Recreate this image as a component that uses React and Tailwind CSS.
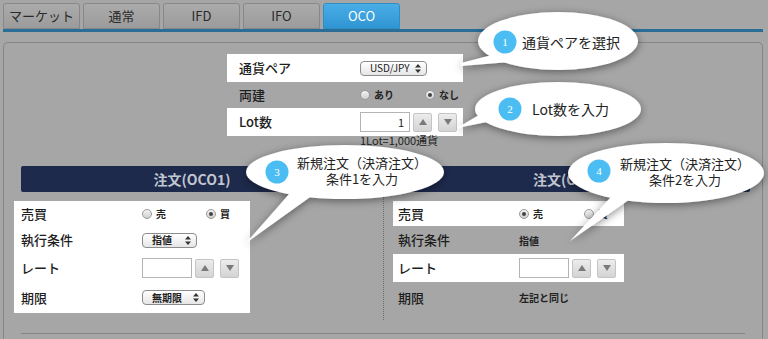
import React from 'react';

const FONT = { fontFamily: '"Noto Sans CJK JP", "Noto Sans", sans-serif' };

// little up/down arrows used in select boxes
function SelectArrows() {
  return (
    <svg width="6" height="9" viewBox="0 0 6 9" className="shrink-0">
      <path d="M3 0 L6 3.5 L0 3.5 Z" fill="#333" />
      <path d="M0 5.5 L6 5.5 L3 9 Z" fill="#333" />
    </svg>
  );
}

function Select({ label, width, bold = false }) {
  return (
    <div
      className={`h-[15px] ${width} rounded-[4px] border border-[#8c8c8c] bg-gradient-to-b from-white to-[#e6e6e6] flex items-center justify-between pl-[9px] pr-[5px]`}
    >
      <span className={`text-[10px] leading-none text-[#222] whitespace-nowrap ${bold ? 'font-bold' : ''}`}>{label}</span>
      <SelectArrows />
    </div>
  );
}

function Radio({ checked, label }) {
  return (
    <div className="flex items-center gap-[4px] shrink-0">
      <span className="w-[10px] h-[10px] shrink-0 rounded-full border border-[#9a9a9a] bg-gradient-to-b from-[#f4f4f4] to-[#cfcfcf] flex items-center justify-center">
        {checked && <span className="w-[4px] h-[4px] rounded-full bg-[#444]" />}
      </span>
      <span className="text-[10px] leading-none font-bold text-[#222] whitespace-nowrap">{label}</span>
    </div>
  );
}

function StepButton({ up }) {
  return (
    <div className="w-[19px] h-[19px] rounded-[2px] border border-[#c4c4c4] bg-gradient-to-b from-[#ececec] to-[#d4d4d4] flex items-center justify-center">
      <svg width="8" height="6" viewBox="0 0 8 6">
        {up ? <path d="M4 0 L8 6 L0 6 Z" fill="#7a7a7a" /> : <path d="M0 0 L8 0 L4 6 Z" fill="#7a7a7a" />}
      </svg>
    </div>
  );
}

function NumberInput({ value = '' }) {
  return (
    <div className="flex items-center">
      <div className="w-[50px] h-[20px] border border-[#b4b4b4] bg-white flex items-center justify-end pr-[5px] text-[11px] text-[#222]">
        {value}
      </div>
      <div className="ml-[3px]"><StepButton up /></div>
      <div className="ml-[6px]"><StepButton /></div>
    </div>
  );
}

function Tab({ label, active }) {
  return (
    <div
      className={`w-[77px] h-[26px] rounded-t-[3px] border flex items-center justify-center text-[13px] ${
        active
          ? 'bg-gradient-to-b from-[#49aee6] to-[#2f95d3] border-[#2f8cc4] text-white'
          : 'bg-gradient-to-b from-[#ababab] to-[#9b9b9b] border-[#878787] text-[#2a2a2a]'
      }`}
    >
      {label}
    </div>
  );
}

function Row({ label, height, white, labelWidth, labelPad, width, children }) {
  return (
    <div className={`flex items-center ${height} ${width} ${white ? 'bg-white' : ''}`}>
      <div className={`${labelWidth} ${labelPad} text-[13px] font-medium text-[#1e1e1e] shrink-0`}>{label}</div>
      {children}
    </div>
  );
}

function Header({ label, width, ml }) {
  return (
    <div className={`${ml} ${width} h-[26px] bg-[#1e2a4c] rounded-[2px] flex items-center justify-center`}>
      <span className="text-[14px] font-bold text-[#c2c6d0]">{label}</span>
    </div>
  );
}

// speech bubbles laid over the screen
function Bubbles() {
  return (
    <svg className="absolute left-0 top-0 pointer-events-none" width="768" height="339" viewBox="0 0 768 339">
      <defs>
        <filter id="sh" x="-20%" y="-40%" width="140%" height="180%">
          <feDropShadow dx="0" dy="2" stdDeviation="4" floodColor="#000" floodOpacity="0.45" />
        </filter>
      </defs>
      <g filter="url(#sh)" fill="#fff">
        <ellipse cx="558" cy="41" rx="80" ry="29" />
        <polygon points="496,54 510,62 461,66 461,63" />
      </g>
      <g filter="url(#sh)" fill="#fff">
        <ellipse cx="558" cy="109" rx="83" ry="27" />
        <polygon points="484,112 492,121 457,128" />
      </g>
      <g filter="url(#sh)" fill="#fff">
        <ellipse cx="345" cy="172" rx="99" ry="27" />
        <polygon points="290,193 313,195 246,243" />
      </g>
      <g filter="url(#sh)" fill="#fff">
        <ellipse cx="666" cy="173" rx="98" ry="30" />
        <polygon points="612,196 633,197 570,241" />
      </g>
      <g fill="#4bbdf3">
        <circle cx="505" cy="42" r="11.5" />
        <circle cx="510" cy="109" r="11.5" />
        <circle cx="277" cy="172" r="11.5" />
        <circle cx="599" cy="171" r="11.5" />
      </g>
    </svg>
  );
}

function Num({ n, x, y }) {
  return (
    <div
      className="absolute w-[24px] h-[24px] flex items-center justify-center text-[11px] text-white"
      style={{ left: x - 12, top: y - 12, fontFamily: '"Liberation Serif", serif' }}
    >
      {n}
    </div>
  );
}

export default function App() {
  return (
    <div className="relative w-[768px] h-[339px] overflow-hidden bg-[#a6a6a6]" style={FONT}>
      {/* tabs */}
      <div className="flex gap-[3px] pl-[3px] pt-[3px]">
        <Tab label="マーケット" />
        <Tab label="通常" />
        <Tab label="IFD" />
        <Tab label="IFO" />
        <Tab label="OCO" active />
      </div>
      <div className="ml-[3px] w-[760px] h-[3px] bg-[#2a6d96]" />

      {/* panel */}
      <div className="ml-[3px] mt-[10px] w-[760px] h-[300px] border border-b-0 border-[#858585] rounded-t-[5px]">
        <div className="pt-[11px] pl-[223px]">
          <Row label="通貨ペア" height="h-[28px]" width="w-[236px]" labelWidth="w-[133px]" labelPad="pl-[12px]" white>
            <Select label="USD/JPY" width="w-[67px]" />
          </Row>
          <Row label="両建" height="h-[26px]" width="w-[236px]" labelWidth="w-[133px]" labelPad="pl-[12px]">
            <div className="flex gap-[31px]">
              <Radio label="あり" />
              <Radio label="なし" checked />
            </div>
          </Row>
          <Row label="Lot数" height="h-[28px]" width="w-[236px]" labelWidth="w-[133px]" labelPad="pl-[12px]" white>
            <NumberInput value="1" />
          </Row>
          <div className="-mt-[2px] pl-[133px] h-[12px] leading-[12px] text-[11px] text-[#222] whitespace-nowrap">1Lot=1,000通貨</div>
        </div>

        <div className="flex mt-[20px]">
          {/* left order */}
          <div className="w-[379px] pl-[10px] shrink-0">
            <Header label="注文(OCO1)" width="w-[342px]" ml="ml-[7px]" />
            <div className="mt-[9px] w-[236px] bg-white">
              <Row label="売買" height="h-[25px]" width="w-full" labelWidth="w-[128px]" labelPad="pl-[7px]">
                <div className="flex gap-[40px]">
                  <Radio label="売" />
                  <Radio label="買" checked />
                </div>
              </Row>
              <Row label="執行条件" height="h-[28px]" width="w-full" labelWidth="w-[128px]" labelPad="pl-[7px]">
                <Select label="指値" width="w-[55px]" bold />
              </Row>
              <Row label="レート" height="h-[28px]" width="w-full" labelWidth="w-[128px]" labelPad="pl-[7px]">
                <NumberInput />
              </Row>
              <Row label="期限" height="h-[31px]" width="w-full" labelWidth="w-[128px]" labelPad="pl-[7px]">
                <Select label="無期限" width="w-[63px]" bold />
              </Row>
            </div>
          </div>

          <div className="mt-[29px] h-[125px] border-l border-dotted border-[#6e6e6e]" />

          {/* right order */}
          <div className="pl-[9px]">
            <Header label="注文(OCO2)" width="w-[357px]" ml="" />
            <div className="mt-[9px]">
              <Row label="売買" height="h-[25px]" width="w-[231px]" labelWidth="w-[126px]" labelPad="pl-[5px]" white>
                <div className="flex gap-[41px]">
                  <Radio label="売" checked />
                  <Radio label="買" />
                </div>
              </Row>
              <Row label="執行条件" height="h-[28px]" width="w-[231px]" labelWidth="w-[126px]" labelPad="pl-[5px]">
                <span className="text-[10px] font-bold text-[#222]">指値</span>
              </Row>
              <Row label="レート" height="h-[28px]" width="w-[231px]" labelWidth="w-[126px]" labelPad="pl-[5px]" white>
                <NumberInput />
              </Row>
              <Row label="期限" height="h-[31px]" width="w-[231px]" labelWidth="w-[126px]" labelPad="pl-[5px]">
                <span className="text-[10px] font-bold text-[#222]">左記と同じ</span>
              </Row>
            </div>
          </div>
        </div>

        <div className="mt-[13px] ml-[17px] w-[724px] h-px bg-[#858585]" />
      </div>

      {/* callouts */}
      <Bubbles />
      <Num n="1" x={505} y={42} />
      <Num n="2" x={510} y={109} />
      <Num n="3" x={277} y={172} />
      <Num n="4" x={599} y={171} />
      <div className="absolute left-[522px] top-[32px] text-[14px] leading-[20px] text-[#222] whitespace-nowrap">通貨ペアを選択</div>
      <div className="absolute left-[532px] top-[99px] text-[14px] leading-[20px] text-[#222] whitespace-nowrap">Lot数を入力</div>
      <div className="absolute left-[292px] top-[155px] w-[140px] text-center text-[13px] leading-[16px] text-[#222]">
        新規注文（決済注文）<br />条件1を入力
      </div>
      <div className="absolute left-[615px] top-[156px] w-[140px] text-center text-[13px] leading-[16px] text-[#222]">
        新規注文（決済注文）<br />条件2を入力
      </div>
    </div>
  );
}
